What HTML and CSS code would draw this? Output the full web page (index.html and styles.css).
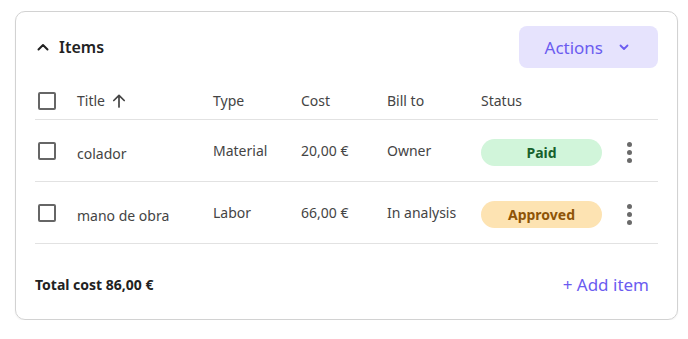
FILE: index.html
```html
<!DOCTYPE html>
<html>
<head>
    <title>Items</title>
    <link rel="stylesheet" href="styles.css">
</head>
<body>
    <div class="card">
        <div class="card-header">
            <div class="section-title">
                <svg class="chevron" width="14" height="14" viewBox="0 0 14 14"><path d="M2.5 9.5 L7 5 L11.5 9.5" fill="none" stroke="#222" stroke-width="2" stroke-linecap="round" stroke-linejoin="round"/></svg>
                <span>Items</span>
            </div>
            <button class="btn-actions">
                Actions
                <svg width="12" height="12" viewBox="0 0 12 12"><path d="M2.5 4.5 L6 8 L9.5 4.5" fill="none" stroke="#6b5cf0" stroke-width="1.8" stroke-linecap="round" stroke-linejoin="round"/></svg>
            </button>
        </div>

        <div class="items-table">
            <div class="row head">
                <div class="cell"><span class="checkbox"></span></div>
                <div class="cell">Title
                    <svg class="sort" width="16" height="16" viewBox="0 0 16 16"><path d="M8 14 V2.5 M2.8 7.5 L8 2.3 L13.2 7.5" fill="none" stroke="#444" stroke-width="1.7" stroke-linecap="round" stroke-linejoin="round"/></svg>
                </div>
                <div class="cell">Type</div>
                <div class="cell">Cost</div>
                <div class="cell">Bill to</div>
                <div class="cell">Status</div>
                <div class="cell"></div>
            </div>
            <div class="row">
                <div class="cell"><span class="checkbox"></span></div>
                <div class="cell title">colador</div>
                <div class="cell">Material</div>
                <div class="cell">20,00 €</div>
                <div class="cell">Owner</div>
                <div class="cell shifted"><span class="badge paid">Paid</span></div>
                <div class="cell shifted"><span class="dots"><i></i><i></i><i></i></span></div>
            </div>
            <div class="row">
                <div class="cell"><span class="checkbox"></span></div>
                <div class="cell title">mano de obra</div>
                <div class="cell">Labor</div>
                <div class="cell">66,00 €</div>
                <div class="cell">In analysis</div>
                <div class="cell shifted"><span class="badge approved">Approved</span></div>
                <div class="cell shifted"><span class="dots"><i></i><i></i><i></i></span></div>
            </div>
        </div>

        <div class="card-footer">
            <div class="total">Total cost 86,00 €</div>
            <a class="add-item" href="#">+ Add item</a>
        </div>
    </div>
</body>
</html>
```

FILE: styles.css
```css
body {
    margin: 0;
    padding: 11px 10px 0 15px;
    font-family: "Noto Sans", "Open Sans", sans-serif;
    background-color: #fff;
    color: #333;
}
.card {
    border: 1px solid #d2d2d2;
    border-radius: 10px;
    padding: 14px 19px 15px 19px;
    box-shadow: 0 1px 2px rgba(0,0,0,0.06);
}
.card-header {
    display: flex;
    align-items: center;
    justify-content: space-between;
}
.section-title {
    display: flex;
    align-items: center;
    gap: 9px;
    font-size: 16px;
    font-weight: 600;
    color: #222;
}
.chevron {
    margin-left: 1px;
}
.btn-actions {
    display: flex;
    align-items: center;
    gap: 15px;
    height: 42px;
    padding: 0 28px 0 26px;
    border: none;
    border-radius: 8px;
    background-color: #e6e3fd;
    color: #6b5cf0;
    font-family: inherit;
    font-size: 17px;
    cursor: pointer;
}
.items-table {
    margin-top: 15px;
}
.row {
    display: grid;
    grid-template-columns: 42px 136px 88px 86px 94px 139px 1fr;
    height: 61px;
    border-bottom: 1px solid #e2e2e2;
    font-size: 14px;
    color: #444;
}
.row.head {
    height: 36px;
}
.cell {
    display: flex;
    align-items: center;
}
.cell.title {
    padding-top: 6px;
}
.cell.shifted {
    padding-top: 4px;
}
.head .cell {
    padding-bottom: 1px;
}
.sort {
    margin-left: 6px;
}
.checkbox {
    display: inline-block;
    width: 14px;
    height: 14px;
    margin-left: 3px;
    border: 2px solid #666;
    border-radius: 2px;
}
.badge {
    display: inline-block;
    width: 121px;
    height: 27px;
    line-height: 27px;
    border-radius: 14px;
    text-align: center;
    font-size: 14px;
    font-weight: 700;
}
.paid {
    background-color: #d1f5da;
    color: #17612c;
}
.approved {
    background-color: #fde3b2;
    color: #8e5407;
}
.dots {
    display: flex;
    flex-direction: column;
    gap: 3px;
    margin-left: 7px;
}
.dots i {
    display: block;
    width: 5px;
    height: 5px;
    border-radius: 50%;
    background-color: #6a6a6a;
}
.card-footer {
    display: flex;
    align-items: center;
    justify-content: space-between;
    height: 40px;
    margin-top: 20px;
}
.total {
    font-size: 14px;
    font-weight: 700;
    color: #222;
}
.add-item {
    margin-right: 9px;
    color: #6b5cf0;
    font-size: 17px;
    text-decoration: none;
}
```
